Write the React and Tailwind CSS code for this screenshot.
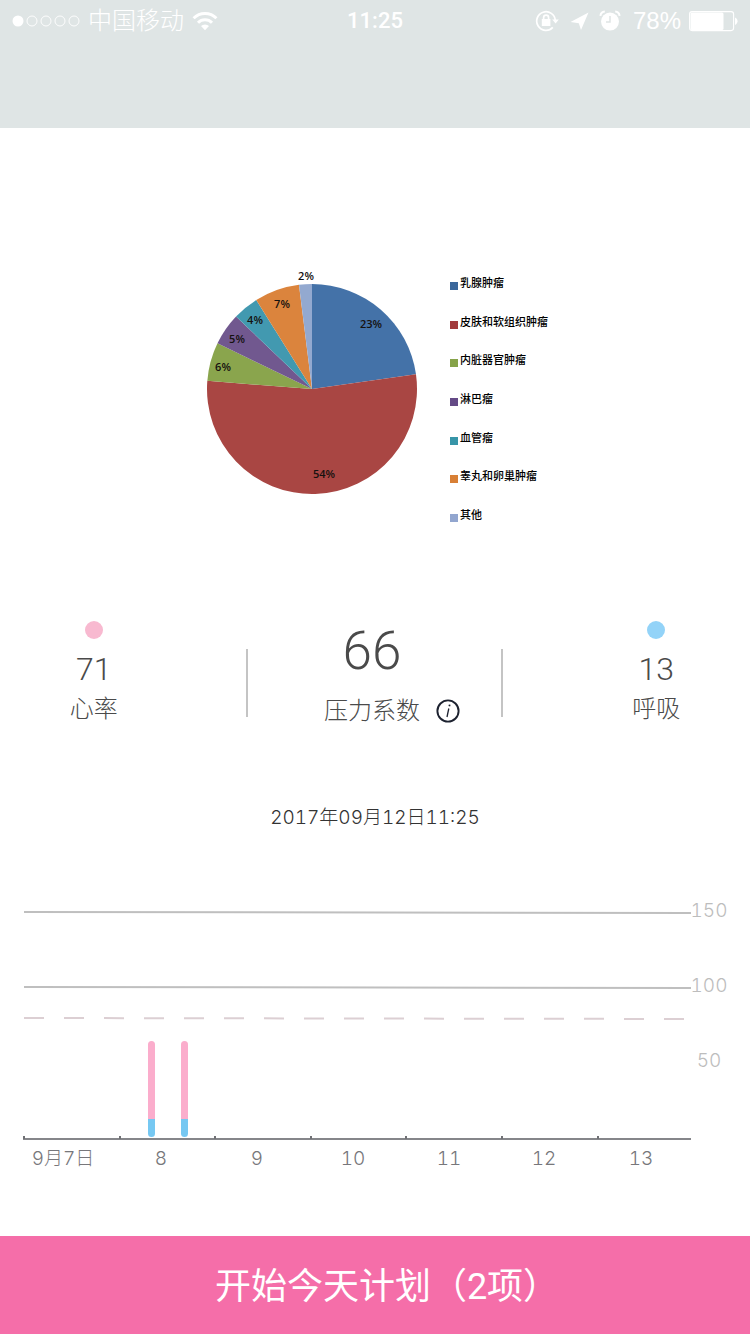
const slices = [
  { name: "乳腺肿瘤", value: 23, fill: "#4472a8", swatch: "bg-[#3a679b]", x: 165, y: 60 },
  { name: "皮肤和软组织肿瘤", value: 54, fill: "#a94643", swatch: "bg-[#a23a3c]", x: 118, y: 210 },
  { name: "内脏器官肿瘤", value: 6, fill: "#8aa54d", swatch: "bg-[#86a349]", x: 17, y: 103 },
  { name: "淋巴瘤", value: 5, fill: "#71588f", swatch: "bg-[#644a86]", x: 31, y: 75 },
  { name: "血管瘤", value: 4, fill: "#4299b0", swatch: "bg-[#3795a8]", x: 49, y: 56 },
  { name: "睾丸和卵巢肿瘤", value: 7, fill: "#db843d", swatch: "bg-[#d87f35]", x: 76, y: 40 },
  { name: "其他", value: 2, fill: "#93a9d0", swatch: "bg-[#92a6cf]", x: 100, y: 12 },
];

const ticks = [24, 120, 215, 311, 406, 502, 598];
const days = [
  { label: "9月7日", x: 63 },
  { label: "8", x: 161 },
  { label: "9", x: 257 },
  { label: "10", x: 353 },
  { label: "11", x: 449 },
  { label: "12", x: 544 },
  { label: "13", x: 641 },
];
const bars = [148, 181];

function StatusBar() {
  return (
    <div className="grid h-[42px] grid-cols-[1fr_auto_1fr] items-center px-3 text-[22px] leading-none text-white">
      <div className="flex items-center gap-2">
        <svg width="68" height="12" viewBox="0 0 68 12" fill="none" stroke="white">
          <circle cx="6" cy="6" r="5.5" fill="white" stroke="none" />
          {[20, 34, 48, 62].map((x) => (
            <circle key={x} cx={x} cy="6" r="5" strokeWidth="0.9" />
          ))}
        </svg>
        <span className="text-[24px] font-light">中国移动</span>
        <svg width="26" height="20" viewBox="0 0 26 20" fill="none" stroke="white">
          <path d="M1.6 7.2a16 16 0 0 1 22.8 0" strokeWidth="3" />
          <path d="M6 11.7a9.8 9.8 0 0 1 14 0" strokeWidth="3" />
          <path d="M13 19.2l-4-4.2a5.8 5.8 0 0 1 8 0z" fill="white" stroke="none" />
        </svg>
      </div>
      <time className="font-medium">11:25</time>
      <div className="flex items-center justify-end gap-2">
        <svg width="25" height="22" viewBox="0 0 25 22" fill="none" stroke="white" strokeWidth="1.7">
          <path d="M20.3 10.5A9.3 9.3 0 1 0 17.8 17.4" />
          <path d="M17.2 9.6h6.6l-3.2 4z" fill="white" stroke="none" />
          <rect x="6.8" y="9" width="8.6" height="7" fill="white" stroke="none" />
          <path d="M8.6 9.5V7.7a2.5 2.5 0 0 1 5 0v1.8" />
        </svg>
        <svg width="23" height="20" viewBox="0 0 23 20" fill="white">
          <path d="M20.5 1.5L2.5 11l8.3 1.3L13 19z" />
        </svg>
        <svg width="22" height="22" viewBox="0 0 22 22" fill="none" stroke="white">
          <circle cx="11" cy="11.6" r="9" fill="white" stroke="none" />
          <path d="M1.4 5.8A5 5 0 0 1 5.8 1.5M16.2 1.5a5 5 0 0 1 4.4 4.3" strokeWidth="2" />
          <path d="M11 6v6H7" stroke="#dfe5e5" strokeWidth="1.5" />
        </svg>
        <span className="pl-1 font-['Liberation_Sans',sans-serif] text-[24px]">78%</span>
        <svg width="49" height="21" viewBox="0 0 49 21" fill="none">
          <rect x="0.6" y="0.6" width="44" height="19" rx="2.5" stroke="white" strokeWidth="1.1" />
          <rect x="1.5" y="1.5" width="33" height="17.5" rx="1.5" fill="white" />
          <path d="M46 6.5c3.4 1.6 3.4 5.8 0 7.4z" fill="white" />
        </svg>
      </div>
    </div>
  );
}

function PieChart() {
  const total = slices.reduce((sum, s) => sum + s.value, 0);
  const point = (part) => {
    const a = (part / total) * Math.PI * 2;
    return `${106 + 105 * Math.sin(a)} ${121 - 105 * Math.cos(a)}`;
  };
  let start = 0;

  return (
    <svg width="212" height="228" viewBox="0 0 212 228" className="shrink-0">
      {slices.map((s) => {
        const from = start;
        start += s.value;
        const large = s.value > total / 2 ? 1 : 0;
        return (
          <path key={s.name} fill={s.fill} d={`M106 121L${point(from)}A105 105 0 ${large} 1 ${point(start)}Z`} />
        );
      })}
      <g fill="#15110f" textAnchor="middle" className="font-['Open_Sans',sans-serif] text-[11px] font-semibold">
        {slices.map((s) => (
          <text key={s.name} x={s.x} y={s.y}>{s.value}%</text>
        ))}
      </g>
    </svg>
  );
}

function Stat({ value, label, dot }) {
  return (
    <div className="flex flex-col items-center">
      <span className={`size-[18px] rounded-full ${dot}`} />
      <span className="mt-3 text-[32px] leading-9">{value}</span>
      <span className="mt-1 text-[24px] leading-9">{label}</span>
    </div>
  );
}

function TrendChart() {
  return (
    <svg viewBox="0 0 750 280" className="block w-full font-[Inter,'Noto_Sans_CJK_SC',sans-serif] text-[19px] font-light tabular-nums" fill="none">
      <g stroke="#bfbfbf" strokeWidth="2">
        <path d="M24 17L691 18" />
        <path d="M24 92L691 93" />
      </g>
      <path d="M24 123L691 124" stroke="#dccfd3" strokeWidth="2" strokeDasharray="20 20" />
      {bars.map((x) => (
        <g key={x}>
          <path d={`M${x} 224v-74.5a3.5 3.5 0 0 1 7 0V224z`} fill="#fbadcc" />
          <path d={`M${x} 224v14.5a3.5 3.5 0 0 0 7 0V224z`} fill="#76c8f2" />
        </g>
      ))}
      <path d="M23 244H691" stroke="#85868a" strokeWidth="2" />
      {ticks.map((x) => (
        <path key={x} d={`M${x} 241v3`} stroke="#707175" strokeWidth="2" />
      ))}
      <g fill="#bdbdbd" textAnchor="middle">
        <text x="709" y="22">150</text>
        <text x="709" y="97">100</text>
        <text x="709" y="172">50</text>
      </g>
      <g fill="#77777b" textAnchor="middle">
        {days.map((d) => (
          <text key={d.label} x={d.x} y="270">{d.label}</text>
        ))}
      </g>
    </svg>
  );
}

export default function App() {
  return (
    <div className="flex min-h-screen flex-col bg-white font-[Roboto,'Noto_Sans_CJK_SC',sans-serif]">
      <header className="h-32 bg-[#dfe5e5]">
        <StatusBar />
      </header>

      <main className="flex flex-col">
        <section className="mt-[140px] flex justify-center gap-8 pl-1">
          <PieChart />
          <ul className="flex h-64 flex-col justify-between pt-2 text-[11px] leading-4 font-medium text-black">
            {slices.map((s) => (
              <li key={s.name} className="flex items-center gap-0.5">
                <span className={`mt-1 size-2 ${s.swatch}`} />
                {s.name}
              </li>
            ))}
          </ul>
        </section>

        <section className="mt-[97px] grid grid-cols-4 font-light text-[#4a4a4a]">
          <Stat value="71" label="心率" dot="bg-[#f8b9d0]" />
          <div className="col-span-2 flex items-center justify-between pr-[60px] pl-[58px]">
            <span className="mt-4 h-[68px] w-0.5 bg-[#c4c4c4]" />
            <div className="flex flex-1 flex-col pr-1">
              <span className="text-center text-[53px] leading-[60px]">66</span>
              <div className="mt-3 grid grid-cols-[1fr_auto_1fr] items-center text-[24px] leading-9">
                <span className="col-start-2">压力系数</span>
                <button type="button" aria-label="压力系数" className="ml-4 size-6 rounded-full">
                  <svg viewBox="0 0 24 24" fill="none" stroke="#1d2230">
                    <circle cx="12" cy="12" r="10.6" strokeWidth="1.9" />
                    <path d="M12.8 9.5L11 18" strokeWidth="1.3" />
                    <path d="M13.7 5.6L13.3 7.3" strokeWidth="1.7" />
                  </svg>
                </button>
              </div>
            </div>
            <span className="mt-4 h-[68px] w-0.5 bg-[#c4c4c4]" />
          </div>
          <Stat value="13" label="呼吸" dot="bg-[#93d3f8]" />
        </section>

        <time className="mt-[77px] text-center font-[Inter,'Noto_Sans_CJK_SC',sans-serif] text-[19px] leading-6 font-light text-[#333] tabular-nums">
          2017年09月12日11:25
        </time>

        <section className="mt-[65px]">
          <TrendChart />
        </section>
      </main>

      <button type="button" className="mt-auto h-[98px] w-full bg-[#f56ea9] pt-1 pl-6 text-[36px] text-white">
        开始今天计划（2项）
      </button>
    </div>
  );
}
